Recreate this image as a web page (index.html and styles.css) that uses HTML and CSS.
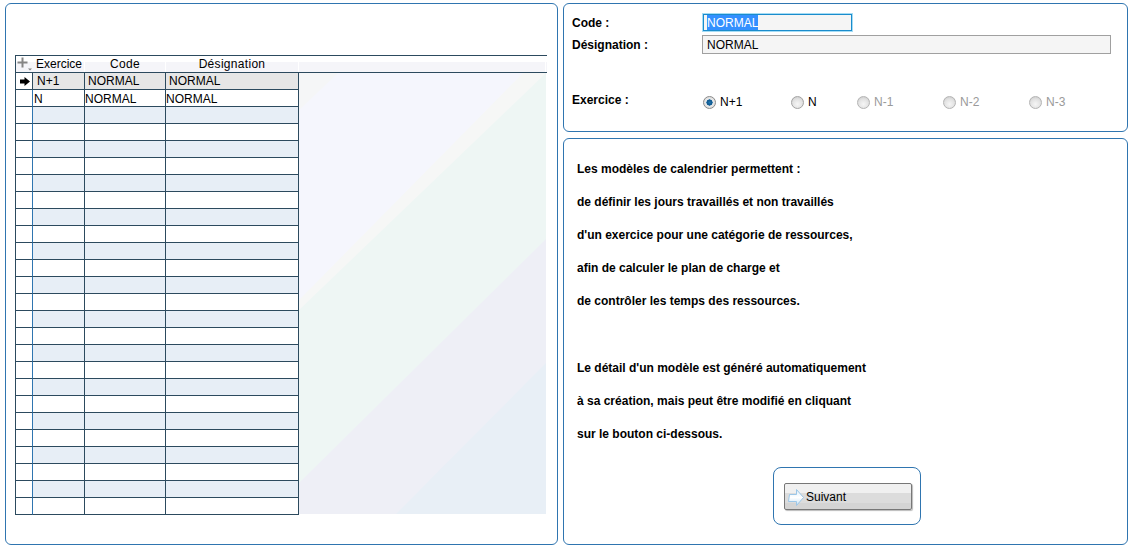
FILE: index.html
```html
<!DOCTYPE html>
<html lang="fr">
<head>
<meta charset="utf-8">
<title>Modèles de calendrier</title>
<link rel="stylesheet" href="styles.css">
</head>
<body>
<div class="page">
  <section class="panel left">
    <div class="grid">
      <div class="grid-head">
        <div class="hc c0"><svg class="plus" width="16" height="15" viewBox="0 0 16 15"><path d="M0.500 5.500h10M5.500 0.500v10" fill="none" stroke="#858585" stroke-width="2"/><path d="M11 11.500h4l-2 2z" fill="#858585"/></svg></div>
        <div class="hc c1">Exercice</div>
        <div class="hc c2">Code</div>
        <div class="hc c3">Désignation</div>
        <div class="hc hfill"></div>
      </div>
      <div class="grid-body">
        <table class="rows">
          <colgroup><col class="c0"><col class="c1"><col class="c2"><col class="c3"></colgroup>
          <tbody>
            <tr class="sel"><td class="rh"><svg width="10" height="9" viewBox="0 0 10 9"><path d="M0 2.500h4.500V0L10 4.500 4.500 9V6.500H0z" fill="#000"/></svg></td><td>N+1</td><td>NORMAL</td><td>NORMAL</td></tr>
            <tr class="filled"><td class="rh"></td><td>N</td><td>NORMAL</td><td>NORMAL</td></tr>
            <tr class="alt"><td class="rh"></td><td></td><td></td><td></td></tr>
            <tr><td class="rh"></td><td></td><td></td><td></td></tr>
            <tr class="alt"><td class="rh"></td><td></td><td></td><td></td></tr>
            <tr><td class="rh"></td><td></td><td></td><td></td></tr>
            <tr class="alt"><td class="rh"></td><td></td><td></td><td></td></tr>
            <tr><td class="rh"></td><td></td><td></td><td></td></tr>
            <tr class="alt"><td class="rh"></td><td></td><td></td><td></td></tr>
            <tr><td class="rh"></td><td></td><td></td><td></td></tr>
            <tr class="alt"><td class="rh"></td><td></td><td></td><td></td></tr>
            <tr><td class="rh"></td><td></td><td></td><td></td></tr>
            <tr class="alt"><td class="rh"></td><td></td><td></td><td></td></tr>
            <tr><td class="rh"></td><td></td><td></td><td></td></tr>
            <tr class="alt"><td class="rh"></td><td></td><td></td><td></td></tr>
            <tr><td class="rh"></td><td></td><td></td><td></td></tr>
            <tr class="alt"><td class="rh"></td><td></td><td></td><td></td></tr>
            <tr><td class="rh"></td><td></td><td></td><td></td></tr>
            <tr class="alt"><td class="rh"></td><td></td><td></td><td></td></tr>
            <tr><td class="rh"></td><td></td><td></td><td></td></tr>
            <tr class="alt"><td class="rh"></td><td></td><td></td><td></td></tr>
            <tr><td class="rh"></td><td></td><td></td><td></td></tr>
            <tr class="alt"><td class="rh"></td><td></td><td></td><td></td></tr>
            <tr><td class="rh"></td><td></td><td></td><td></td></tr>
            <tr class="alt"><td class="rh"></td><td></td><td></td><td></td></tr>
            <tr><td class="rh"></td><td></td><td></td><td></td></tr>
          </tbody>
        </table>
        <svg class="wash" width="247" height="441" viewBox="0 0 247 441">
          <rect width="247" height="441" fill="#e8eff6"/>
          <polygon points="0,0 247,0 247,290 97,441 0,441" fill="#eeeff6"/>
          <polygon points="0,0 247,0 247,166 0,410" fill="#eef6f4"/>
          <polygon points="0,0 247,0 0,237" fill="#f6f7f6"/>
          <polygon points="0,0 224,0 0,227" fill="#f5f6fd"/>
          <polygon points="0,0 39,0 0,37" fill="#f5f6f7"/>
        </svg>
      </div>
    </div>
  </section>

  <div class="side">
    <section class="panel form">
      <div class="field">
        <span class="label">Code :</span>
        <div class="box focus"><span class="selected">NORMAL</span></div>
      </div>
      <div class="field">
        <span class="label">Désignation :</span>
        <div class="box wide">NORMAL</div>
      </div>
      <div class="choice">
        <span class="label choice-label">Exercice :</span>
        <div class="radios">
          <span class="opt"><i class="radio on"></i>N+1</span>
          <span class="opt"><i class="radio"></i>N</span>
          <span class="opt off"><i class="radio"></i>N-1</span>
          <span class="opt off"><i class="radio"></i>N-2</span>
          <span class="opt off"><i class="radio"></i>N-3</span>
        </div>
      </div>
    </section>

    <section class="panel info">
      <p>Les modèles de calendrier permettent :</p>
      <p>de définir les jours travaillés et non travaillés</p>
      <p>d'un exercice pour une catégorie de ressources,</p>
      <p>afin de calculer le plan de charge et</p>
      <p>de contrôler les temps des ressources.</p>
      <p>&nbsp;</p>
      <p>Le détail d'un modèle est généré automatiquement</p>
      <p>à sa création, mais peut être modifié en cliquant</p>
      <p>sur le bouton ci-dessous.</p>
      <div class="action">
        <button class="next" type="button">
          <svg width="18" height="19" viewBox="0 0 18 19">
            <defs><linearGradient id="arrowFill" x1="0" y1="0" x2="0" y2="1"><stop offset="0" stop-color="#dcedf9"/><stop offset="0.5" stop-color="#ffffff"/><stop offset="1" stop-color="#c4e0f5"/></linearGradient></defs>
            <path d="M2.500 6.500H9.500V1.500L16.500 9.500 9.500 17.500V13.500H1.500z" fill="url(#arrowFill)" stroke="#9cc7e8" stroke-linejoin="round"/>
          </svg>
          Suivant
        </button>
      </div>
    </section>
  </div>
</div>
</body>
</html>
```

FILE: styles.css
```css
* { box-sizing: border-box; }

html, body {
  margin: 0;
  padding: 0;
  background: #fff;
}

body {
  font-family: "Liberation Sans", Arial, sans-serif;
  font-size: 12px;
  color: #000;
  overflow: hidden;
}

.page {
  display: flex;
  gap: 5px;
  padding: 3px 8px 0 5px;
  height: 549px;
}

.panel {
  border: 1px solid #2f75b0;
  border-radius: 6px;
  background: #fff;
}

.left {
  width: 553px;
  height: 542px;
  padding: 51px 10px 0 9px;
}

.side {
  width: 565px;
  display: flex;
  flex-direction: column;
  gap: 6px;
}

/* Grid */
.grid {
  width: 532px;
  border-top: 1px solid #2c4a5e;
}

.grid-head {
  display: flex;
  height: 17px;
  border-bottom: 1px solid #2c4a5e;
  border-left: 1px solid #2c4a5e;
  background: linear-gradient(#fff 0, #fff 6px, #f5f5f9 6px, #f5f5f9 100%);
  line-height: 17px;
}

.hc {
  flex: none;
  text-align: center;
  border-right: 1px solid #fff;
}

.hc.c0 { width: 17px; border-right: 0; }
.hc.c1 { width: 52px; text-align: left; padding-left: 3px; }
.hc.c2 { width: 81px; letter-spacing: 0.3px; }
.hc.c3 { width: 133px; letter-spacing: 0.3px; }
.hc.hfill { flex: 1; margin-right: 1px; }

.plus { display: block; margin: 1px 0 0 1px; }

.grid-body {
  display: flex;
  align-items: flex-start;
}

.rows {
  table-layout: fixed;
  border-collapse: separate;
  border-spacing: 0;
  width: 284px;
  border-left: 1px solid #2c4a5e;
  flex: none;
}

col.c0 { width: 17px; }
col.c1 { width: 52px; }
col.c2 { width: 81px; }
col.c3 { width: 133px; }

.rows td {
  height: 17px;
  padding: 0;
  border-right: 1px solid #2c4a5e;
  border-bottom: 1px solid #2c4a5e;
  line-height: 16px;
  white-space: nowrap;
  overflow: hidden;
  vertical-align: top;
  background: #fff;
}

.rows td:nth-child(2) { padding-left: 1px; }

.rows .filled td {
  padding-top: 2px;
  line-height: 14px;
}

.rows td.rh {
  background: #fff;
  border-right-color: #2f75b0;
}

.rows td.rh svg { display: block; margin: 4px 0 0 4px; }

.rows .alt td { background: #e7eef6; }
.rows .alt td.rh { background: #fff; }

.rows .sel td { background: #e6e6e6; padding-left: 3px; }
.rows .sel td:nth-child(2) { padding-left: 4px; }
.rows .sel td.rh { background: #fff; padding-left: 0; border-right-color: #2c4a5e; }

.wash { display: block; flex: none; }

/* Form */
.form {
  height: 129px;
  padding: 9px 16px 0 8px;
}

.field {
  display: flex;
  align-items: flex-start;
  height: 19px;
  margin-bottom: 3px;
}

.label {
  display: block;
  width: 130px;
  flex: none;
  font-weight: bold;
  line-height: 21px;
}

.box {
  height: 19px;
  width: 409px;
  padding-left: 4px;
  border: 1px solid #a0a0a0;
  background: #f5f5f5;
  line-height: 19px;
}

.box.focus {
  width: 149px;
  height: 17px;
  margin: 1px 0 0 1px;
  padding-left: 3px;
  line-height: 15px;
  border-color: #1a8ccc;
  box-shadow: 0 0 0 1px #a4dcf5;
}

.selected {
  display: inline-block;
  height: 15px;
  padding-top: 1px;
  line-height: 14px;
  background: #3390ff;
  color: #fff;
  vertical-align: top;
}

.choice {
  display: flex;
  margin-top: 38px;
}

.choice-label { line-height: 17px; }

.radios {
  display: grid;
  grid-template-columns: 88px 66px 86px 86px 86px;
  padding: 3px 0 0 1px;
}

.opt {
  display: flex;
  align-items: center;
  gap: 4px;
  line-height: 15px;
}

.opt.off { color: #9a9a9a; }

.radio {
  display: block;
  width: 13px;
  height: 13px;
  border-radius: 50%;
  border: 1px solid #a3a3a3;
  background: radial-gradient(circle at 50% 65%, #f6f6f6 0, #e2e2e2 55%, #c4c4c4 100%);
}

.radio.on {
  background: radial-gradient(circle, #1c79b8 0, #14588c 30%, #1e6da5 38%, #e8e8e8 42%, #d8d8d8 100%);
  border-color: #8a8a8a;
}

.opt.off .radio { border-color: #b4b4b4; }

/* Info */
.info {
  height: 407px;
  padding: 14px 0 0 13px;
}

.info p {
  margin: 0;
  height: 33.1px;
  line-height: 33px;
  font-weight: bold;
}

.action {
  width: 148px;
  height: 58px;
  margin: 16px 0 0 196px;
  padding: 15px 0 0 10px;
  border: 1px solid #2f75b0;
  border-radius: 8px;
}

.next {
  display: flex;
  align-items: center;
  gap: 1px;
  width: 128px;
  height: 27px;
  margin: 0;
  padding: 2px 0 0 2px;
  border: 1px solid #777;
  border-radius: 2px;
  background: linear-gradient(#f0f0f0 0, #f0f0f0 9px, #dcdcdc 9px, #dcdcdc 19px, #d4d4d4 19px, #d4d4d4 100%);
  box-shadow: 1px 1px 1px #bbb;
  font: 12px "Liberation Sans", Arial, sans-serif;
  color: #000;
}
```
